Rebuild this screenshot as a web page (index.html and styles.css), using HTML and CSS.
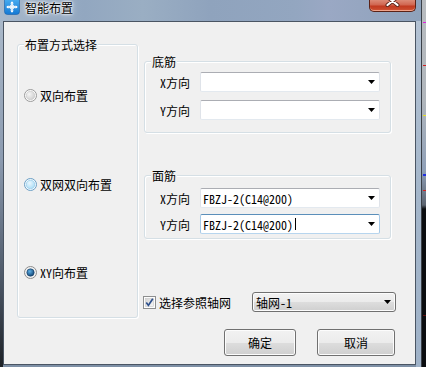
FILE: index.html
```html
<!DOCTYPE html>
<html lang="zh-CN">
<head>
<meta charset="utf-8">
<title>智能布置</title>
<link rel="stylesheet" href="styles.css">
</head>
<body>
<div class="desk">
  <div class="win">
    <div class="titlebar">
      <svg class="app-icon" width="16" height="15" viewBox="0 0 16 15">
        <defs>
          <linearGradient id="ig" x1="0" y1="0" x2="0" y2="1">
            <stop offset="0" stop-color="#4fb4f4"/>
            <stop offset="1" stop-color="#1479d4"/>
          </linearGradient>
        </defs>
        <rect x="0.5" y="-3" width="15" height="17.5" rx="3" fill="url(#ig)" stroke="#1a5fa8" stroke-width="0.6"/>
        <path d="M3.2 7 H12.8 M8 2.2 V11.8" stroke="#fff" stroke-width="1.3" fill="none"/>
        <circle cx="8" cy="7" r="2.2" stroke="#fff" stroke-width="1" fill="none"/>
        <path d="M2.2 7 L4.4 5.2 V8.8 Z M13.8 7 L11.6 5.2 V8.8 Z M8 1.2 L6.2 3.4 H9.8 Z M8 12.8 L6.2 10.6 H9.8 Z" fill="#fff"/>
      </svg>
      <span class="title">智能布置</span>
      <div class="close">
        <svg width="45" height="11" viewBox="0 0 45 11">
          <path d="M17.5 -3 L27.5 5 M27.5 -3 L17.5 5" stroke="#5a2418" stroke-width="4" stroke-linecap="round"/>
          <path d="M17.5 -3 L27.5 5 M27.5 -3 L17.5 5" stroke="#fff" stroke-width="2.2" stroke-linecap="round"/>
        </svg>
      </div>
    </div>
    <div class="frame">
      <div class="frame-l"></div>
      <div class="client">
        <div class="main">
          <div class="group group-mode">
            <div class="group-title">布置方式选择</div>
            <div class="radio-list">
              <div class="radio-row">
                <svg class="radio" width="13" height="13" viewBox="0 0 13 13">
                  <defs>
                    <radialGradient id="r1g" cx="0.35" cy="0.35" r="0.7">
                      <stop offset="0" stop-color="#f6f6f6"/>
                      <stop offset="1" stop-color="#cfcfcf"/>
                    </radialGradient>
                  </defs>
                  <circle cx="6.5" cy="6.5" r="6" fill="#fdfdfd" stroke="#9a9a9a"/>
                  <circle cx="6.5" cy="6.5" r="4.3" fill="url(#r1g)" stroke="#c4c4c4" stroke-width="0.6"/>
                </svg>
                <span>双向布置</span>
              </div>
              <div class="radio-row row2">
                <svg class="radio" width="13" height="13" viewBox="0 0 13 13">
                  <defs>
                    <radialGradient id="r2g" cx="0.4" cy="0.35" r="0.7">
                      <stop offset="0" stop-color="#eaf7fe"/>
                      <stop offset="1" stop-color="#a9dcf6"/>
                    </radialGradient>
                  </defs>
                  <circle cx="6.5" cy="6.5" r="6" fill="#f4fbff" stroke="#6b9ec4"/>
                  <circle cx="6.5" cy="6.5" r="4.3" fill="url(#r2g)" stroke="#8cc4e4" stroke-width="0.6"/>
                </svg>
                <span>双网双向布置</span>
              </div>
              <div class="radio-row row3">
                <svg class="radio" width="13" height="13" viewBox="0 0 13 13">
                  <defs>
                    <radialGradient id="r3g" cx="0.4" cy="0.35" r="0.7">
                      <stop offset="0" stop-color="#5fb0e6"/>
                      <stop offset="1" stop-color="#0d3f6e"/>
                    </radialGradient>
                  </defs>
                  <circle cx="6.5" cy="6.5" r="6" fill="#f2f2f2" stroke="#8c8c8c"/>
                  <circle cx="6.5" cy="6.5" r="3.7" fill="url(#r3g)" stroke="#1a3f66" stroke-width="0.6"/>
                </svg>
                <span>XY向布置</span>
              </div>
            </div>
          </div>

          <div class="right-col">
            <div class="group group-bottom">
              <div class="group-title">底筋</div>
              <div class="rows rows-bottom">
                <div class="field">
                  <span class="field-label">X方向</span>
                  <div class="combo">
                    <span class="combo-text"></span>
                    <svg class="arrow" width="7" height="4" viewBox="0 0 7 4"><path d="M0 0 H7 L3.5 4 Z" fill="#000"/></svg>
                  </div>
                </div>
                <div class="field">
                  <span class="field-label">Y方向</span>
                  <div class="combo">
                    <span class="combo-text"></span>
                    <svg class="arrow" width="7" height="4" viewBox="0 0 7 4"><path d="M0 0 H7 L3.5 4 Z" fill="#000"/></svg>
                  </div>
                </div>
              </div>
            </div>

            <div class="group group-top">
              <div class="group-title">面筋</div>
              <div class="rows rows-top">
                <div class="field">
                  <span class="field-label">X方向</span>
                  <div class="combo">
                    <span class="combo-text">FBZJ-2(C14@200)</span>
                    <svg class="arrow" width="7" height="4" viewBox="0 0 7 4"><path d="M0 0 H7 L3.5 4 Z" fill="#000"/></svg>
                  </div>
                </div>
                <div class="field">
                  <span class="field-label">Y方向</span>
                  <div class="combo combo-focus">
                    <span class="combo-text">FBZJ-2(C14@200)<span class="caret"></span></span>
                    <svg class="arrow" width="7" height="4" viewBox="0 0 7 4"><path d="M0 0 H7 L3.5 4 Z" fill="#000"/></svg>
                  </div>
                </div>
              </div>
            </div>

            <div class="axis-row">
              <svg class="check" width="13" height="13" viewBox="0 0 13 13">
                <defs>
                  <linearGradient id="cg" x1="0" y1="0" x2="1" y2="1">
                    <stop offset="0" stop-color="#d4d4d4"/>
                    <stop offset="1" stop-color="#f6f6f6"/>
                  </linearGradient>
                </defs>
                <rect x="0.5" y="0.5" width="12" height="12" fill="#fdfdfd" stroke="#8e8f8f"/>
                <rect x="2.5" y="2.5" width="8" height="8" fill="url(#cg)" stroke="#c9c9c9" stroke-width="0.6"/>
                <path d="M3.3 6.6 L5.4 9.4 L9.8 2.8" stroke="#2c4f8c" stroke-width="1.7" fill="none"/>
              </svg>
              <span class="check-label">选择参照轴网</span>
              <div class="dropdown">
                <span>轴网-1</span>
                <svg class="arrow" width="7" height="4" viewBox="0 0 7 4"><path d="M0 0 H7 L3.5 4 Z" fill="#000"/></svg>
              </div>
            </div>
          </div>
        </div>

        <div class="buttons">
          <div class="btn btn-ok">确定</div>
          <div class="btn btn-cancel">取消</div>
        </div>
      </div>
      <div class="frame-r"></div>
    </div>
  </div>
  <div class="strip"></div>
</div>
</body>
</html>
```

FILE: styles.css
```css
* { box-sizing: border-box; }

html, body {
  margin: 0;
  padding: 0;
}

body {
  width: 426px;
  height: 367px;
  overflow: hidden;
  background: #0b0d10;
  font-family: "Noto Sans Mono CJK SC", "Noto Sans CJK SC", "Liberation Mono", monospace;
  font-size: 12px;
  color: #000;
}

.desk {
  display: flex;
  width: 426px;
  height: 367px;
}

.win {
  width: 422px;
  height: 367px;
  display: flex;
  flex-direction: column;
  background: linear-gradient(180deg, #9fb1c6 0%, #8fa2ba 40%, #7e90a6 100%);
  border-right: 1px solid #3a4048;
}

/* title bar */
.titlebar {
  height: 21px;
  display: flex;
  align-items: flex-start;
  background: linear-gradient(90deg, #a7b8cb 0%, #9db0c6 8%, #92a7c0 20%, #9aaec3 34%, #8fa3bd 50%, #93a6c0 70%, #9aa8c4 78%, #8ea2bb 100%);
}

.app-icon {
  display: block;
  margin-left: 4px;
  flex: none;
}

.title {
  margin-left: 5px;
  margin-top: 1px;
  line-height: 13px;
  font-family: "Noto Sans CJK SC", sans-serif;
  font-size: 12px;
  color: #000;
  text-shadow: 0 0 6px #fff, 0 0 3px #fff, 0 0 2px #fff;
}

.close {
  margin-left: auto;
  margin-right: 5px;
  width: 47px;
  height: 12px;
  border: 1px solid #5b2216;
  border-top: none;
  border-radius: 0 0 5px 5px;
  background: linear-gradient(180deg, #dc8a76 0%, #d0654f 45%, #c13a20 55%, #c9492c 85%, #e07a5c 100%);
  box-shadow: inset 0 -1px 0 rgba(255, 200, 180, 0.6);
  overflow: hidden;
}

.close svg { display: block; }

/* frame */
.frame {
  display: flex;
  height: 346px;
}

.frame-l {
  width: 3px;
  background: linear-gradient(180deg, #aab9ca 0%, #8c9bb0 40%, #4c5766 75%, #1d2126 100%);
}

.frame-r {
  width: 5px;
  background: linear-gradient(180deg, #b3c2d3 0%, #a4b6ca 50%, #9fb2c8 100%);
}

.client {
  width: 413px;
  height: 344px;
  border: 1px solid #4a5563;
  background: #f0f0f0;
  padding: 22px 0 0 13px;
}

.main {
  display: flex;
  align-items: flex-start;
}

/* group boxes */
.group {
  border: 1px solid #d5dfe5;
  border-radius: 3px;
  box-shadow: inset 1px 1px 0 #fff, 1px 1px 0 #fff;
}

.group-title {
  width: max-content;
  margin: -7px 0 0 6px;
  padding: 0 1px;
  line-height: 13px;
  background: #f0f0f0;
}

.group-mode {
  width: 121px;
  height: 274px;
}

.radio-list {
  display: flex;
  flex-direction: column;
  padding-left: 6px;
  margin-top: 38px;
}

.radio-row {
  display: flex;
  align-items: center;
  height: 13px;
  line-height: 13px;
}

.radio-row.row2 { margin-top: 76px; }
.radio-row.row3 { margin-top: 75px; }

.radio {
  display: block;
  flex: none;
  margin-right: 3px;
}

.right-col {
  margin-left: 5px;
  padding-top: 17px;
  display: flex;
  flex-direction: column;
}

.group-bottom {
  width: 247px;
  height: 72px;
  margin-left: 1px;
}

.group-top {
  width: 247px;
  height: 64px;
  margin-left: 1px;
  margin-top: 42px;
}

.rows {
  display: flex;
  flex-direction: column;
  padding-left: 15px;
}

.rows-bottom { margin-top: 4px; gap: 8px; }
.rows-top { margin-top: 6px; gap: 6px; }

.field {
  display: flex;
  align-items: center;
  height: 20px;
}

.field-label {
  width: 40px;
  line-height: 13px;
}

.combo {
  width: 180px;
  height: 20px;
  display: flex;
  align-items: center;
  background: #fff;
  border: 1px solid #dfe3e9;
  border-top-color: #abadb3;
  border-bottom-color: #e3e9ef;
  border-radius: 2px;
  padding-left: 2px;
}

.combo-focus {
  border-color: #a6c9e7;
  border-top-color: #5b8fba;
  border-bottom-color: #b7d5ee;
}

.combo-text {
  display: flex;
  align-items: center;
  line-height: 13px;
  white-space: nowrap;
}

.caret {
  display: inline-block;
  width: 1px;
  height: 12px;
  margin-left: 2px;
  background: #000;
}

.arrow {
  display: block;
  margin-left: auto;
  margin-right: 4px;
}

/* axis row */
.axis-row {
  display: flex;
  align-items: center;
  height: 20px;
  margin-top: 53px;
}

.check {
  display: block;
  flex: none;
}

.check-label {
  margin-left: 3px;
  line-height: 13px;
}

.dropdown {
  margin-left: 21px;
  width: 144px;
  height: 20px;
  display: flex;
  align-items: center;
  padding-left: 3px;
  border: 1px solid #707070;
  border-radius: 3px;
  background: linear-gradient(180deg, #f2f2f2 0%, #ebebeb 50%, #dddddd 51%, #cfcfcf 100%);
  box-shadow: inset 0 0 0 1px #fcfcfc;
  line-height: 13px;
}

.dropdown .arrow { margin-right: 4px; }

/* buttons */
.buttons {
  display: flex;
  gap: 21px;
  margin-top: 11px;
  padding-left: 207px;
}

.btn {
  height: 27px;
  display: flex;
  align-items: center;
  justify-content: center;
  border: 1px solid #707070;
  border-radius: 3px;
  background: linear-gradient(180deg, #f2f2f2 0%, #ebebeb 50%, #dddddd 51%, #cfcfcf 100%);
  box-shadow: inset 0 0 0 1px #fcfcfc;
  line-height: 13px;
}

.btn-ok { width: 72px; }
.btn-cancel { width: 78px; }

/* background strip (application behind) */
.strip {
  width: 4px;
  height: 367px;
  background:
    linear-gradient(#e020e0, #e020e0) 1px 22px / 3px 1px no-repeat,
    linear-gradient(#d02020, #d02020) 1px 65px / 3px 1px no-repeat,
    linear-gradient(#e8e020, #e8e020) 1px 115px / 3px 1px no-repeat,
    linear-gradient(#2030e0, #2030e0) 1px 174px / 3px 2px no-repeat,
    linear-gradient(#d02020, #d02020) 1px 190px / 3px 1px no-repeat,
    linear-gradient(#601010, #601010) 1px 315px / 3px 1px no-repeat,
    linear-gradient(180deg, #b8bcc0 0, #b0b6bc 100px, #8fa0b8 170px, #5c6470 205px, #0b0d10 209px, #0b0d10 100%);
}
```
